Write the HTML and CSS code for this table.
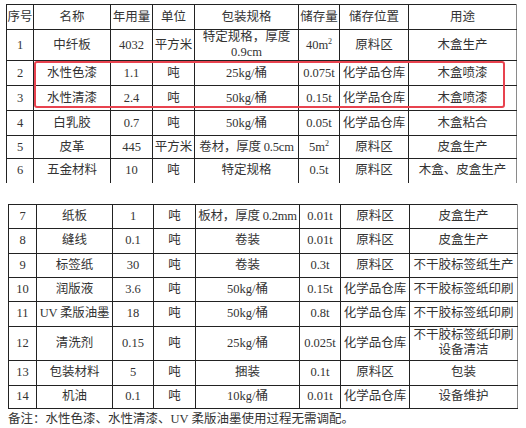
FILE: index.html
```html
<!DOCTYPE html>
<html lang="zh">
<head>
<meta charset="utf-8">
<link rel="stylesheet" href="styles.css">
</head>
<body>
<div class="page">
  <table class="tbl t1">
    <colgroup>
      <col style="width:27px"><col style="width:77px"><col style="width:42px"><col style="width:42px">
      <col style="width:104px"><col style="width:41px"><col style="width:69px"><col style="width:108px">
    </colgroup>
    <tr class="h-head"><td>序号</td><td>名称</td><td>年用量</td><td>单位</td><td>包装规格</td><td>储存量</td><td>储存位置</td><td>用途</td></tr>
    <tr class="h-r1"><td>1</td><td>中纤板</td><td>4032</td><td>平方米</td><td class="wrap">特定规格，厚度 0.9cm</td><td>40m<sup>2</sup></td><td>原料区</td><td>木盒生产</td></tr>
    <tr class="h-25"><td>2</td><td>水性色漆</td><td>1.1</td><td>吨</td><td>25kg/桶</td><td>0.075t</td><td>化学品仓库</td><td>木盒喷漆</td></tr>
    <tr class="h-25"><td>3</td><td>水性清漆</td><td>2.4</td><td>吨</td><td>50kg/桶</td><td>0.15t</td><td>化学品仓库</td><td>木盒喷漆</td></tr>
    <tr class="h-25"><td>4</td><td>白乳胶</td><td>0.7</td><td>吨</td><td>50kg/桶</td><td>0.05t</td><td>化学品仓库</td><td>木盒粘合</td></tr>
    <tr class="h-23"><td>5</td><td>皮革</td><td>445</td><td>平方米</td><td class="tight">卷材，厚度 0.5cm</td><td>5m<sup>2</sup></td><td>原料区</td><td>皮盒生产</td></tr>
    <tr class="h-24 last"><td>6</td><td>五金材料</td><td>10</td><td>吨</td><td>特定规格</td><td>0.5t</td><td>原料区</td><td>木盒、皮盒生产</td></tr>
  </table>

  <table class="tbl t2">
    <colgroup>
      <col style="width:28px"><col style="width:76px"><col style="width:41px"><col style="width:42px">
      <col style="width:104px"><col style="width:41px"><col style="width:69px"><col style="width:108px">
    </colgroup>
    <tr class="h-24"><td>7</td><td>纸板</td><td>1</td><td>吨</td><td class="tight">板材，厚度 0.2mm</td><td>0.01t</td><td>原料区</td><td>皮盒生产</td></tr>
    <tr class="h-25"><td>8</td><td>缝线</td><td>0.1</td><td>吨</td><td>卷装</td><td>0.01t</td><td>原料区</td><td>皮盒生产</td></tr>
    <tr class="h-24"><td>9</td><td>标签纸</td><td>30</td><td>吨</td><td>卷装</td><td>0.3t</td><td>原料区</td><td>不干胶标签纸生产</td></tr>
    <tr class="h-24"><td>10</td><td>润版液</td><td>3.6</td><td>吨</td><td>50kg/桶</td><td>0.15t</td><td>化学品仓库</td><td>不干胶标签纸印刷</td></tr>
    <tr class="h-25"><td>11</td><td class="tight">UV 柔版油墨</td><td>18</td><td>吨</td><td>50kg/桶</td><td>0.8t</td><td>化学品仓库</td><td>不干胶标签纸印刷</td></tr>
    <tr class="h-34"><td>12</td><td>清洗剂</td><td>0.15</td><td>吨</td><td>25kg/桶</td><td>0.025t</td><td>化学品仓库</td><td>不干胶标签纸印刷<br>设备清洁</td></tr>
    <tr class="h-25"><td>13</td><td>包装材料</td><td>5</td><td>吨</td><td>捆装</td><td>0.1t</td><td>原料区</td><td>包装</td></tr>
    <tr class="h-23"><td>14</td><td>机油</td><td>0.1</td><td>吨</td><td>10kg/桶</td><td>0.01t</td><td>化学品仓库</td><td>设备维护</td></tr>
  </table>

  <p class="note">备注：水性色漆、水性清漆、UV 柔版油墨使用过程无需调配。</p>

  <div class="highlight"></div>
</div>
</body>
</html>
```

FILE: styles.css
```css
html, body {
  margin: 0;
  padding: 0;
  background: #ffffff;
}

.page {
  position: relative;
  width: 526px;
  height: 428px;
  padding-top: 4px;
  box-sizing: border-box;
  display: flex;
  flex-direction: column;
  font-family: "Liberation Serif", "Noto Sans CJK SC", serif;
  font-size: 12.5px;
  color: #333333;
}

.tbl {
  border-collapse: collapse;
  table-layout: fixed;
}

.tbl td {
  border: 1px solid #222222;
  padding: 0;
  text-align: center;
  vertical-align: middle;
  line-height: 15px;
  white-space: nowrap;
  overflow: hidden;
}

.tbl td.wrap {
  white-space: normal;
}

.tbl td:last-child {
  border-right-color: #8a8a8a;
}

.tbl td.tight {
  letter-spacing: -0.2px;
}

.tbl sup {
  font-size: 8px;
  line-height: 0;
  vertical-align: 5px;
}

.t1 {
  width: 510px;
  margin-left: 6px;
}

.t1 tr.last td {
  border-bottom: none;
}

.t2 {
  width: 509px;
  margin-left: 8px;
  margin-top: 21px;
}

.h-head { height: 25px; }
.h-r1 { height: 31px; }
.h-23 { height: 23px; }
.h-24 { height: 24px; }
.h-25 { height: 25px; }
.h-34 { height: 34px; }

.note {
  margin: 2px 0 0 8px;
  line-height: 16px;
  font-size: 12.5px;
}

.highlight {
  position: absolute;
  left: 34px;
  top: 61px;
  width: 467px;
  height: 43px;
  border: 2.5px solid #e8434f;
  border-radius: 3px;
}
```
